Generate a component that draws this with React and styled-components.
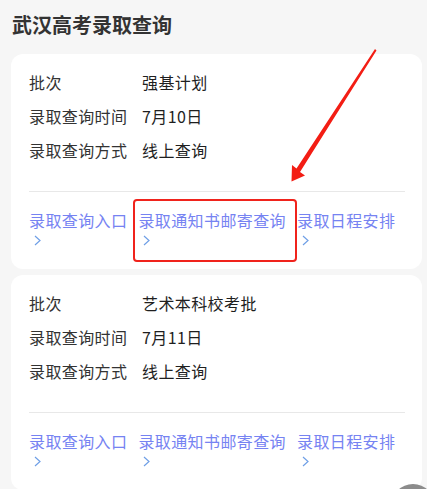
import React from 'react';
import styled, { createGlobalStyle } from 'styled-components';

const GlobalStyle = createGlobalStyle`
  html, body {
    margin: 0;
    padding: 0;
    background: #f6f6f6;
    font-family: "Noto Sans CJK SC", "Noto Sans", sans-serif;
  }
`;

const Page = styled.div`
  position: relative;
  min-height: 100vh;
  padding-bottom: 20px;
  box-sizing: border-box;
`;

const Title = styled.h1`
  margin: 0;
  padding: 11px 12px 0;
  font-size: 20px;
  line-height: 28px;
  font-weight: 700;
  color: #333;
`;

const CardList = styled.div`
  display: flex;
  flex-direction: column;
  gap: 6px;
  margin: 15px 5px 0 11px;
`;

const Card = styled.div`
  background: #fff;
  border-radius: 12px;
  padding: 11px 17px 18px 18px;
`;

const Row = styled.div`
  display: grid;
  grid-template-columns: 113px 1fr;
  align-items: center;
  height: 34px;
  font-size: 16px;
  letter-spacing: 0.4px;
`;

const Label = styled.span`
  color: #333;
`;

const Value = styled.span`
  color: #1f1f1f;
`;

const Divider = styled.div`
  height: 1px;
  background: #e8e8e8;
  margin: 24px 0 17px;
`;

const Links = styled.div`
  display: flex;
  gap: 11px;
`;

const LinkItem = styled.a`
  display: flex;
  flex-direction: column;
  font-size: 16px;
  line-height: 22px;
  letter-spacing: 0.4px;
  color: #7683f2;
  text-decoration: none;
  cursor: pointer;
`;

const Chevron = styled.svg`
  width: 7px;
  height: 11px;
  margin: 4px 0 5px 5px;
`;

const HighlightBox = styled.div`
  position: absolute;
  left: 133px;
  top: 199px;
  width: 164px;
  height: 63px;
  box-sizing: border-box;
  border: 2px solid #f0231c;
  border-radius: 4px;
  pointer-events: none;
`;

const ArrowLayer = styled.svg`
  position: absolute;
  left: 0;
  top: 0;
  width: 427px;
  height: 200px;
  pointer-events: none;
`;

const FloatButton = styled.div`
  position: fixed;
  right: -8px;
  bottom: -39px;
  width: 44px;
  height: 44px;
  border-radius: 50%;
  background: #8c8c8c;
`;

const cards = [
  { batch: '强基计划', time: '7月10日', way: '线上查询' },
  { batch: '艺术本科校考批', time: '7月11日', way: '线上查询' },
];

const links = ['录取查询入口', '录取通知书邮寄查询', '录取日程安排'];

const Arrow = () => (
  <Chevron viewBox="0 0 7 11">
    <path d="M1 1l5 4.5L1 10" fill="none" stroke="#6f9fe6" strokeWidth="1.2" />
  </Chevron>
);

const App = () => {
  return (
    <Page>
      <GlobalStyle />
      <Title>武汉高考录取查询</Title>
      <CardList>
        {cards.map((c, i) => (
          <Card key={i}>
            <Row>
              <Label>批次</Label>
              <Value>{c.batch}</Value>
            </Row>
            <Row>
              <Label>录取查询时间</Label>
              <Value>{c.time}</Value>
            </Row>
            <Row>
              <Label>录取查询方式</Label>
              <Value>{c.way}</Value>
            </Row>
            <Divider />
            <Links>
              {links.map((l) => (
                <LinkItem key={l}>
                  <span>{l}</span>
                  <Arrow />
                </LinkItem>
              ))}
            </Links>
          </Card>
        ))}
      </CardList>

      {/* 标注 */}
      <HighlightBox />
      <ArrowLayer viewBox="0 0 427 200">
        <polygon
          points="375,49 376.5,50.5 300,172 305,175.5 291.5,181.5 292,165 296.5,168.5"
          fill="#f31d14"
        />
      </ArrowLayer>
      <FloatButton />
    </Page>
  );
};

export default App;
